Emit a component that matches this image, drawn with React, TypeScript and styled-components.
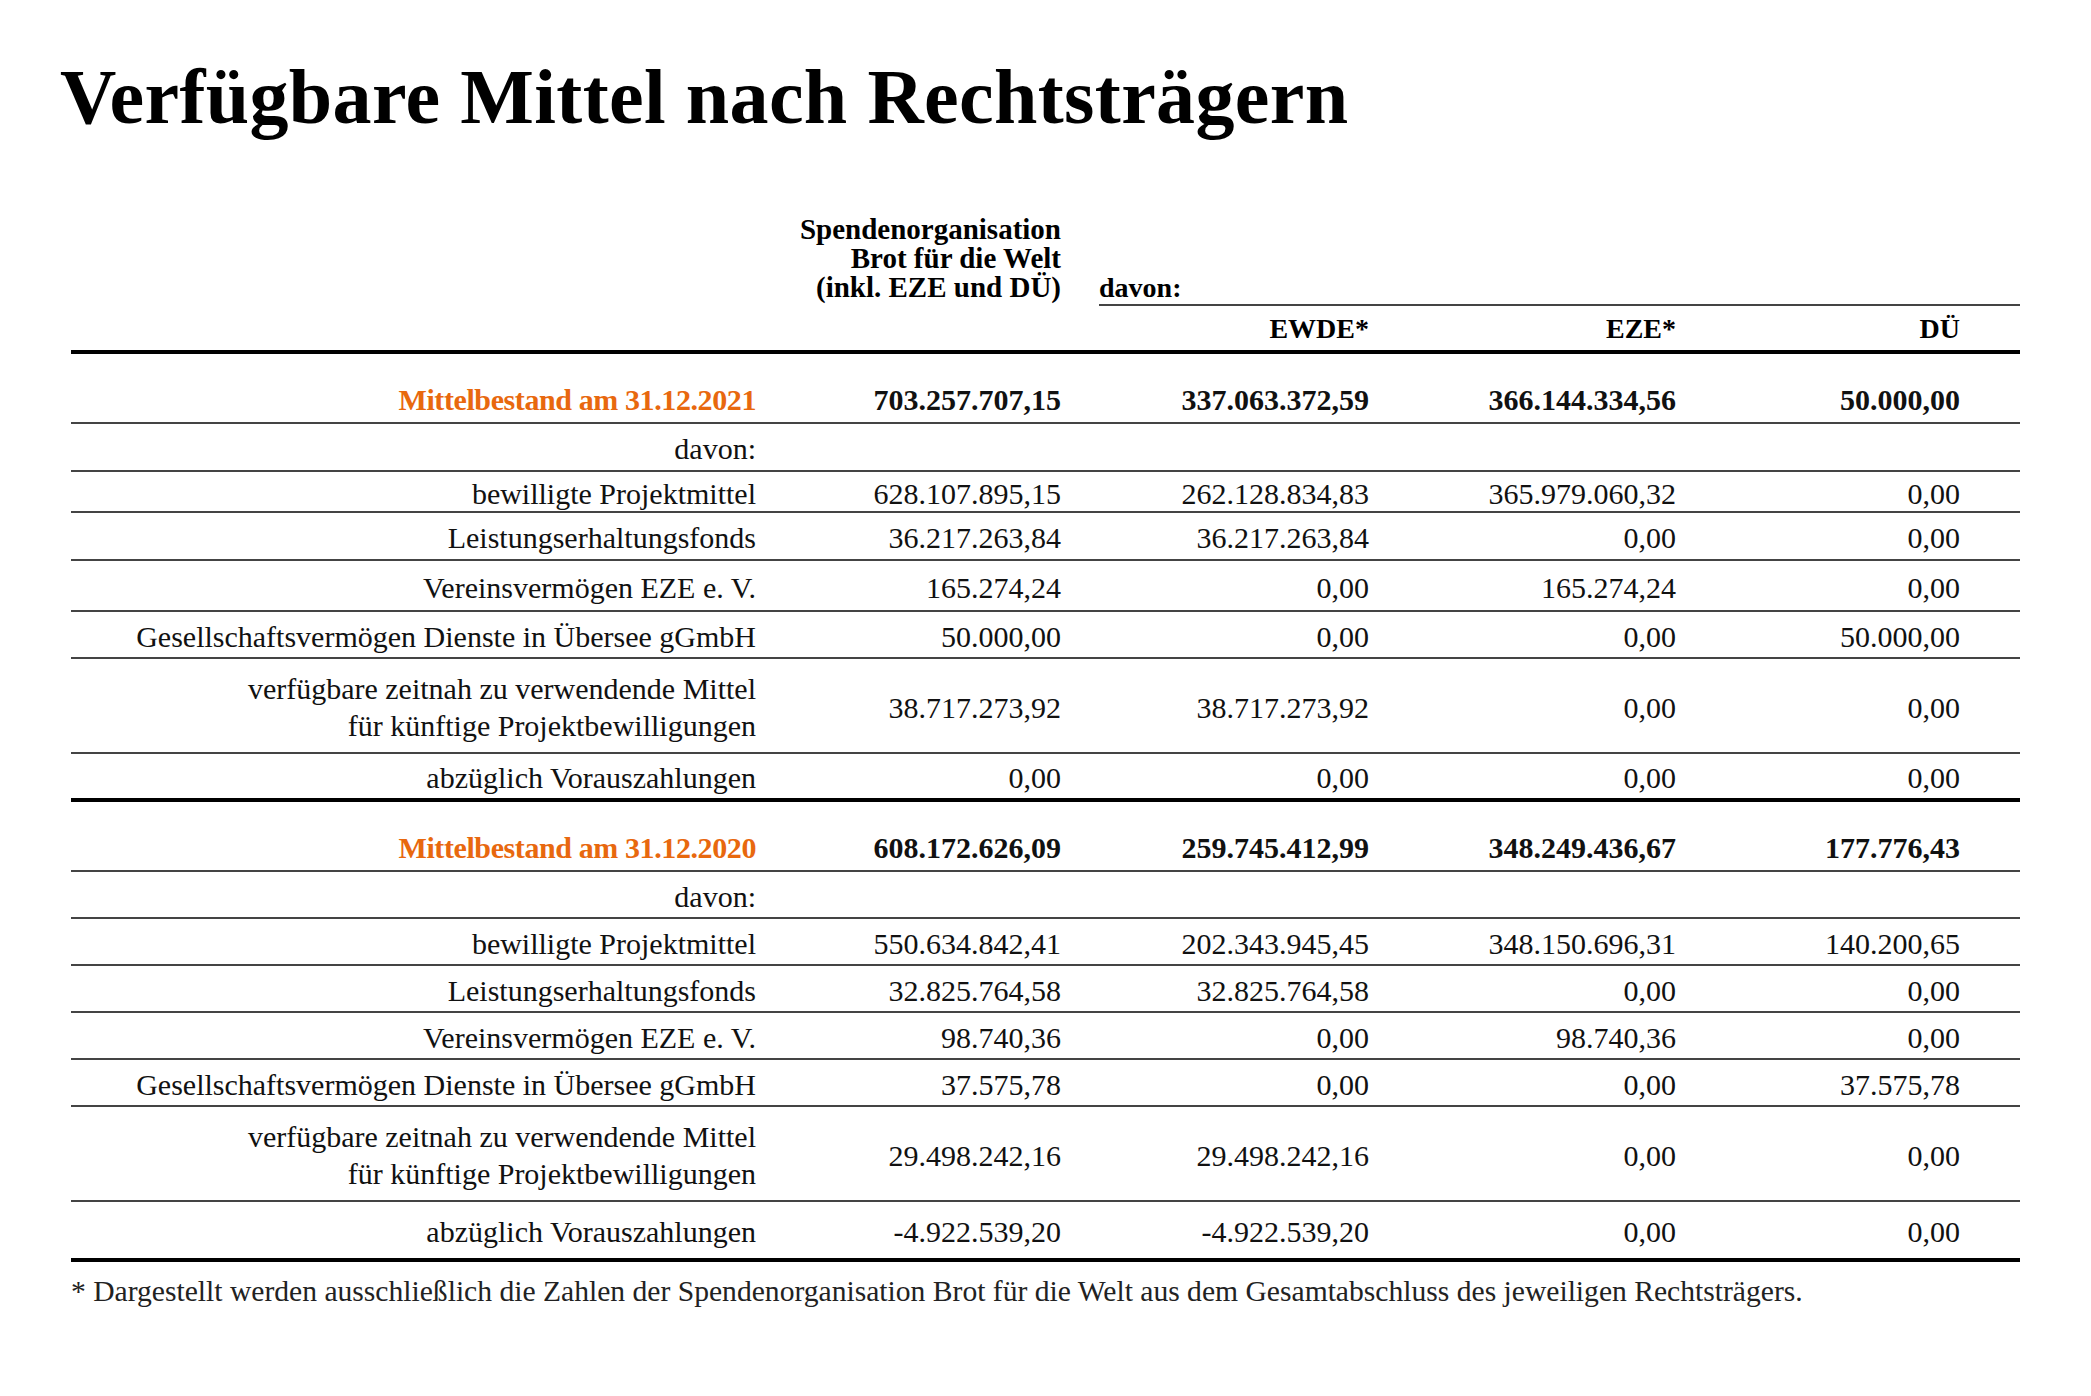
import React from 'react';
import styled, { createGlobalStyle, css } from 'styled-components';

const GlobalStyle = createGlobalStyle`
  html, body { margin: 0; padding: 0; background: #ffffff; }
  body {
    font-family: "Liberation Serif", "Times New Roman", serif;
    color: #111111;
  }
`;

const COLS = '708px 320px 307px 306px 308px';
const PADS = [23, 38, 37, 36, 60];

const Page = styled.main`
  width: 2091px;
  min-height: 1396px;
  box-sizing: border-box;
  padding: 52px 0 0 60px;
`;

const Title = styled.h1`
  margin: 0;
  font-size: 78px;
  line-height: 90px;
  font-weight: 700;
  letter-spacing: 0.35px;
  color: #000;
`;

const Table = styled.section`
  margin: 73px 0 0 11px;
  width: 1949px;
`;

const HeadTop = styled.div`
  display: grid;
  grid-template-columns: ${COLS};
  align-items: end;
`;

const boldHead = css`
  font-weight: 700;
  font-size: 28px;
  line-height: 29px;
  color: #000;
`;

const OrgCell = styled.div`
  ${boldHead};
  font-size: 29px;
  grid-column: 2;
  text-align: right;
  padding: 0 38px 4px 0;
`;

const DavonHead = styled.div`
  ${boldHead};
  grid-column: 3 / 6;
  border-bottom: 2px solid #444;
  padding-bottom: 2px;
`;

const HeadCols = styled.div`
  display: grid;
  grid-template-columns: ${COLS};
  height: 48px;
  box-sizing: border-box;
  border-bottom: 4px solid #000;
  align-items: center;
`;

const HeadLabel = styled.div<{ $col: number }>`
  ${boldHead};
  text-align: right;
  padding-right: ${(p) => PADS[p.$col]}px;
`;

type Kind = 'head' | 'normal' | 'double';

const Row = styled.div<{ $kind: Kind; $end?: boolean; $h?: number }>`
  display: grid;
  grid-template-columns: ${COLS};
  box-sizing: border-box;
  border-bottom: ${(p) => (p.$end ? '4px solid #000' : '2px solid #444')};
  ${(p) =>
    p.$kind === 'head'
      ? css`
          height: 70px;
          align-items: end;
          padding-bottom: 8px;
        `
      : p.$kind === 'double'
      ? css`
          height: 95px;
          align-items: center;
          padding-top: 3px;
        `
      : css`
          height: ${p.$h ?? (p.$end ? 48 : 47)}px;
          align-items: center;
          padding-top: 3px;
        `}
`;

const Cell = styled.div<{ $col: number; $bold?: boolean; $accent?: boolean; $double?: boolean }>`
  text-align: right;
  padding-right: ${(p) => PADS[p.$col]}px;
  font-size: 30px;
  line-height: ${(p) => (p.$double ? 37 : 29)}px;
  font-weight: ${(p) => (p.$bold ? 700 : 400)};
  color: ${(p) => (p.$accent ? '#e8680e' : '#111')};
  letter-spacing: ${(p) => (p.$accent ? '-0.4px' : '0')};
  white-space: nowrap;
`;

const Footnote = styled.p`
  margin: 11px 0 0 11px;
  font-size: 29.6px;
  line-height: 36px;
  color: #222;
`;

type Line = { label: string | string[]; values: string[]; h?: number };
type Section = { head: Line; rows: Line[] };

const sections: Section[] = [
  {
    head: {
      label: 'Mittelbestand am 31.12.2021',
      values: ['703.257.707,15', '337.063.372,59', '366.144.334,56', '50.000,00'],
    },
    rows: [
      { label: 'davon:', values: ['', '', '', ''], h: 48 },
      { label: 'bewilligte Projektmittel', values: ['628.107.895,15', '262.128.834,83', '365.979.060,32', '0,00'], h: 41 },
      { label: 'Leistungserhaltungsfonds', values: ['36.217.263,84', '36.217.263,84', '0,00', '0,00'], h: 48 },
      { label: 'Vereinsvermögen EZE e. V.', values: ['165.274,24', '0,00', '165.274,24', '0,00'], h: 51 },
      { label: 'Gesellschaftsvermögen Dienste in Übersee gGmbH', values: ['50.000,00', '0,00', '0,00', '50.000,00'] },
      {
        label: ['verfügbare zeitnah zu verwendende Mittel', 'für künftige Projektbewilligungen'],
        values: ['38.717.273,92', '38.717.273,92', '0,00', '0,00'],
      },
      { label: 'abzüglich Vorauszahlungen', values: ['0,00', '0,00', '0,00', '0,00'] },
    ],
  },
  {
    head: {
      label: 'Mittelbestand am 31.12.2020',
      values: ['608.172.626,09', '259.745.412,99', '348.249.436,67', '177.776,43'],
    },
    rows: [
      { label: 'davon:', values: ['', '', '', ''] },
      { label: 'bewilligte Projektmittel', values: ['550.634.842,41', '202.343.945,45', '348.150.696,31', '140.200,65'] },
      { label: 'Leistungserhaltungsfonds', values: ['32.825.764,58', '32.825.764,58', '0,00', '0,00'] },
      { label: 'Vereinsvermögen EZE e. V.', values: ['98.740,36', '0,00', '98.740,36', '0,00'] },
      { label: 'Gesellschaftsvermögen Dienste in Übersee gGmbH', values: ['37.575,78', '0,00', '0,00', '37.575,78'] },
      {
        label: ['verfügbare zeitnah zu verwendende Mittel', 'für künftige Projektbewilligungen'],
        values: ['29.498.242,16', '29.498.242,16', '0,00', '0,00'],
      },
      { label: 'abzüglich Vorauszahlungen', values: ['-4.922.539,20', '-4.922.539,20', '0,00', '0,00'], h: 60 },
    ],
  },
];

function DataRow({ line, last }: { line: Line; last: boolean }) {
  const double = Array.isArray(line.label);
  return (
    <Row $kind={double ? 'double' : 'normal'} $end={last} $h={line.h}>
      <Cell $col={0} $double={double}>
        {double
          ? (line.label as string[]).map((t, i) => (
              <React.Fragment key={i}>
                {t}
                {i === 0 && <br />}
              </React.Fragment>
            ))
          : line.label}
      </Cell>
      {line.values.map((v, i) => (
        <Cell key={i} $col={i + 1}>
          {v}
        </Cell>
      ))}
    </Row>
  );
}

export default function App() {
  return (
    <>
      <GlobalStyle />
      <Page>
        <Title>Verfügbare Mittel nach Rechtsträgern</Title>
        <Table>
          <HeadTop>
            <OrgCell>
              Spendenorganisation
              <br />
              Brot für die Welt
              <br />
              (inkl. EZE und DÜ)
            </OrgCell>
            <DavonHead>davon:</DavonHead>
          </HeadTop>
          <HeadCols>
            <HeadLabel $col={0} />
            <HeadLabel $col={1} />
            <HeadLabel $col={2}>EWDE*</HeadLabel>
            <HeadLabel $col={3}>EZE*</HeadLabel>
            <HeadLabel $col={4}>DÜ</HeadLabel>
          </HeadCols>
          {sections.map((s, si) => (
            <React.Fragment key={si}>
              <Row $kind="head">
                <Cell $col={0} $bold $accent>
                  {s.head.label as string}
                </Cell>
                {s.head.values.map((v, i) => (
                  <Cell key={i} $col={i + 1} $bold>
                    {v}
                  </Cell>
                ))}
              </Row>
              {s.rows.map((r, ri) => (
                <DataRow key={ri} line={r} last={ri === s.rows.length - 1} />
              ))}
            </React.Fragment>
          ))}
        </Table>
        <Footnote>
          * Dargestellt werden ausschließlich die Zahlen der Spendenorganisation Brot für die Welt aus dem
          Gesamtabschluss des jeweiligen Rechtsträgers.
        </Footnote>
      </Page>
    </>
  );
}
